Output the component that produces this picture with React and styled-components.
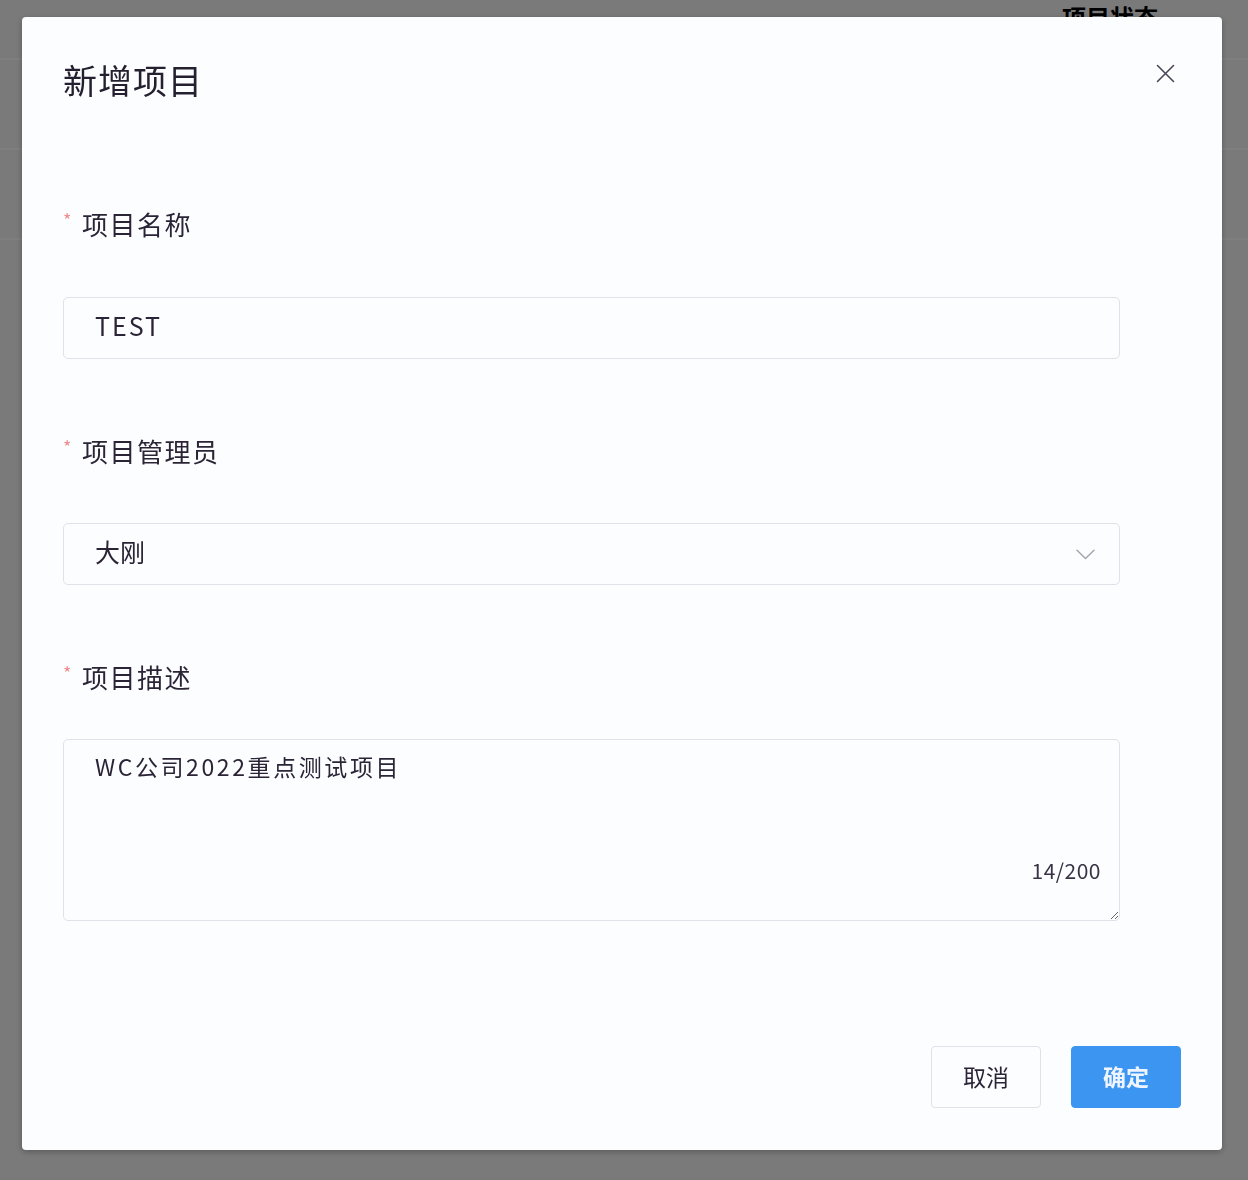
import React from "react";
import styled, { createGlobalStyle } from "styled-components";

const Global = createGlobalStyle`
  html, body { margin: 0; padding: 0; }
  body {
    width: 1248px;
    height: 1180px;
    overflow: hidden;
    font-family: "Noto Sans CJK SC", "Noto Sans", sans-serif;
    background: #f4f4f6;
  }
  * { box-sizing: border-box; }
`;

const Page = styled.div`
  width: 1248px;
  height: 1180px;
  background: #f4f4f6;
  display: flex;
  flex-direction: column;
`;

const PageHeader = styled.div`
  height: 60px;
  display: flex;
  justify-content: flex-end;
  padding: 2px 90px 0 0;
  border-bottom: 2px solid #ffffff;
`;

const PageHeaderText = styled.span`
  font-size: 24px;
  font-weight: 700;
  color: #000;
  line-height: 30px;
`;

const PageRow = styled.div`
  height: 90px;
  border-bottom: 2px solid #ffffff;
`;

const Overlay = styled.div`
  position: fixed;
  inset: 0;
  background: rgba(0, 0, 0, 0.5);
  display: flex;
  align-items: flex-start;
  justify-content: flex-start;
  padding: 17px 0 0 22px;
`;

const Modal = styled.div`
  width: 1200px;
  height: 1133px;
  background: #fcfdff;
  border-radius: 4px;
  box-shadow: 0 2px 6px rgba(0, 0, 0, 0.25);
  display: flex;
  flex-direction: column;
`;

const Header = styled.div`
  display: flex;
  align-items: center;
  justify-content: space-between;
  padding: 40px 46px 0 41px;
  height: 86px;
`;

const Title = styled.h2`
  margin: 0;
  font-size: 34px;
  font-weight: 400;
  line-height: 46px;
  letter-spacing: 1px;
  color: #25202f;
`;

const CloseButton = styled.button`
  width: 22px;
  height: 22px;
  padding: 0;
  border: 0;
  background: transparent;
  display: flex;
  align-items: center;
  justify-content: center;
  margin-top: -14px;
  cursor: pointer;
`;

const Body = styled.div`
  padding: 102px 102px 0 41px;
  display: flex;
  flex-direction: column;
`;

const FormItem = styled.div`
  display: flex;
  flex-direction: column;
  margin-bottom: ${(p) => (p.$last ? 0 : 73)}px;
`;

const Label = styled.label`
  display: flex;
  align-items: center;
  height: 36px;
  margin-bottom: ${(p) => p.$gap}px;
  font-size: 26px;
  color: #2b2436;
  letter-spacing: 1.5px;
`;

const Star = styled.span`
  color: #f08a8a;
  font-size: 18px;
  margin: -8px 9px 0 0;
`;

const Field = styled.div`
  position: relative;
  height: ${(p) => p.$h}px;
  border: 1px solid #dfe2e8;
  border-radius: 5px;
  background: #fcfdff;
  display: flex;
  align-items: center;
  padding: 0 24px 6px 31px;
`;

const FieldText = styled.span`
  flex: 1;
  font-size: 25px;
  color: #2b2436;
  letter-spacing: ${(p) => p.$ls || 0}px;
`;

const Arrow = styled.span`
  display: flex;
  margin-top: 6px;
`;

const TextArea = styled.textarea`
  width: 100%;
  height: 182px;
  border: 1px solid #dfe2e8;
  border-radius: 5px;
  background: #fcfdff;
  padding: 11px 31px;
  font-family: "Noto Sans CJK SC", "Noto Sans", sans-serif;
  font-size: 23px;
  line-height: 30px;
  letter-spacing: 2.6px;
  color: #2b2436;
  resize: both;
  outline: none;
  display: block;
`;

const AreaWrap = styled.div`
  position: relative;
`;

const Counter = styled.span`
  position: absolute;
  right: 19px;
  bottom: 36px;
  font-size: 21px;
  line-height: 30px;
  color: #3a3346;
  letter-spacing: 0.5px;
`;

const Footer = styled.div`
  margin-top: auto;
  padding: 0 41px 42px 0;
  display: flex;
  justify-content: flex-end;
  gap: 30px;
`;

const Button = styled.button`
  width: 110px;
  height: 62px;
  border-radius: 4px;
  font-family: "Noto Sans CJK SC", "Noto Sans", sans-serif;
  font-size: 23px;
  font-weight: ${(p) => (p.$primary ? 700 : 400)};
  color: ${(p) => (p.$primary ? "#eef5ff" : "#2b2436")};
  background: ${(p) => (p.$primary ? "#3b95f1" : "#fcfdff")};
  border: 1px solid ${(p) => (p.$primary ? "#3b95f1" : "#dfe2e8")};
  cursor: pointer;
  padding: 0 0 3px;
`;

const CloseIcon = () => (
  <svg width="19" height="19" viewBox="0 0 19 19" fill="none">
    <path d="M1.5 1.5 L17.5 17.5 M17.5 1.5 L1.5 17.5" stroke="#4a4458" strokeWidth="1.6" strokeLinecap="round" />
  </svg>
);

const Chevron = () => (
  <svg width="19" height="11" viewBox="0 0 19 11" fill="none">
    <path d="M1 1.2 L9.5 9.5 L18 1.2" stroke="#a3a6ae" strokeWidth="1.5" strokeLinecap="round" strokeLinejoin="round" />
  </svg>
);

export default function App() {
  return (
    <>
      <Global />
      <Page>
        <PageHeader>
          <PageHeaderText>项目状态</PageHeaderText>
        </PageHeader>
        <PageRow />
        <PageRow />
      </Page>
      <Overlay>
        <Modal>
          <Header>
            <Title>新增项目</Title>
            <CloseButton aria-label="关闭">
              <CloseIcon />
            </CloseButton>
          </Header>
          <Body>
            <FormItem>
              <Label $gap={56}>
                <Star>*</Star>项目名称
              </Label>
              <Field $h={62}>
                <FieldText $ls={2}>TEST</FieldText>
              </Field>
            </FormItem>
            <FormItem>
              <Label $gap={55}>
                <Star>*</Star>项目管理员
              </Label>
              <Field $h={62}>
                <FieldText>大刚</FieldText>
                <Arrow>
                  <Chevron />
                </Arrow>
              </Field>
            </FormItem>
            <FormItem $last>
              <Label $gap={45}>
                <Star>*</Star>项目描述
              </Label>
              <AreaWrap>
                <TextArea defaultValue="WC公司2022重点测试项目" />
                <Counter>14/200</Counter>
              </AreaWrap>
            </FormItem>
          </Body>
          <Footer>
            <Button>取消</Button>
            <Button $primary>确定</Button>
          </Footer>
        </Modal>
      </Overlay>
    </>
  );
}
